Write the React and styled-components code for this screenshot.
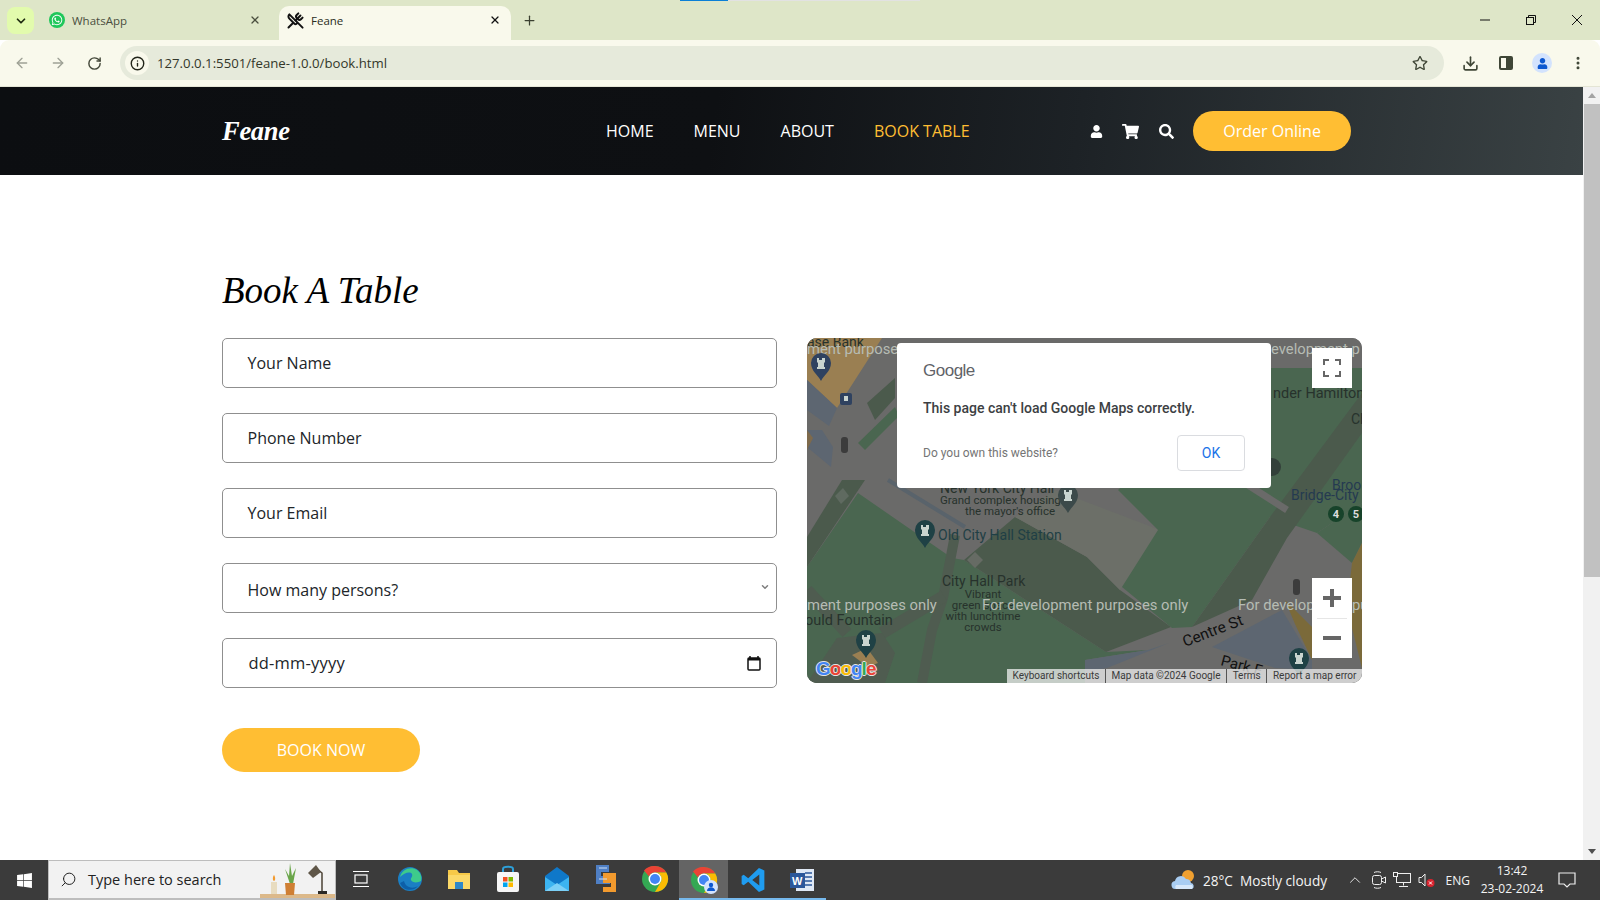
import React from 'react';
import styled, { createGlobalStyle } from 'styled-components';
import {
  FaUser, FaShoppingCart, FaSearch, FaWhatsapp, FaWindows, FaRegStar,
} from 'react-icons/fa';
import {
  ArrowLeft, ArrowRight, RotateCw, ChevronDown, X, Plus, Info, Download, EllipsisVertical, Search, UtensilsCrossed, ChevronUp,
} from 'lucide-react';

const GlobalStyle = createGlobalStyle`
  html, body { margin: 0; padding: 0; height: 100%; overflow: hidden; }
  body { font-family: "Open Sans", "Liberation Sans", sans-serif; background: #fff; }
  * { box-sizing: border-box; }
`;

const Screen = styled.div`
  width: 1600px;
  height: 900px;
  display: flex;
  flex-direction: column;
  overflow: hidden;
`;

/* browser chrome */
const TabStrip = styled.div`
  position: relative;
  height: 40px;
  background: #dee6c8;
  display: flex;
  align-items: flex-end;
  padding-left: 7px;
  flex: none;
`;

const TabMenu = styled.div`
  width: 27px;
  height: 27px;
  margin-bottom: 6px;
  margin-right: 7px;
  border-radius: 8px;
  background: #e2fbad;
  display: flex;
  align-items: center;
  justify-content: center;
  color: #1e2a10;
`;

const Tab = styled.div`
  position: relative;
  width: ${(p) => (p.$active ? '232px' : '238px')};
  height: 34px;
  padding: 0 ${(p) => (p.$active ? '10px' : '18px')} 6px 8px;
  border-radius: 10px 10px 0 0;
  display: flex;
  align-items: center;
  gap: 7px;
  font-size: 11.5px;
  background: ${(p) => (p.$active ? '#f9f9ec' : 'transparent')};
  color: ${(p) => (p.$active ? '#2a2d22' : '#4a4e3e')};
`;

const TabTitle = styled.span`
  flex: 1;
`;

const WaBadge = styled.span`
  width: 16px;
  height: 16px;
  border-radius: 50%;
  background: #1fc75a;
  color: #fff;
  display: flex;
  align-items: center;
  justify-content: center;
`;

const NewTab = styled.div`
  margin: 0 0 12px 11px;
  color: #3b4030;
  display: flex;
`;

const TopStripe = styled.div`
  position: absolute;
  top: 0;
  left: 680px;
  width: 240px;
  height: 1px;
  background: linear-gradient(to right, #0a7fd6 0 48px, #e2e2e2 48px);
`;

const WindowControls = styled.div`
  margin-left: auto;
  align-self: flex-start;
  display: flex;
  color: #111;
`;

const WindowButton = styled.div`
  width: 46px;
  height: 40px;
  display: flex;
  align-items: center;
  justify-content: center;
`;

const Toolbar = styled.div`
  height: 47px;
  flex: none;
  background: #f9f9ec;
  border-radius: 9px 9px 0 0;
  border-bottom: 1px solid #e4e5d5;
  display: flex;
  align-items: center;
  padding: 0 11px;
  gap: 14px;
`;

const NavArrow = styled.span`
  width: 22px;
  display: flex;
  justify-content: center;
  color: ${(p) => (p.$dim ? '#9ea195' : '#44483a')};
`;

const UrlBar = styled.div`
  flex: 1;
  height: 34px;
  margin: 0 1px;
  border-radius: 17px;
  background: #e6eadb;
  display: flex;
  align-items: center;
  padding: 0 16px 0 5px;
  font-size: 13.2px;
  color: #33372a;
`;

const InfoChip = styled.span`
  width: 24px;
  height: 24px;
  border-radius: 50%;
  background: #f9f9ec;
  display: flex;
  align-items: center;
  justify-content: center;
  margin-right: 8px;
  color: #22251a;
`;

const UrlText = styled.span`
  flex: 1;
`;

const ToolIcon = styled.span`
  width: 22px;
  display: flex;
  justify-content: center;
  color: #3f4636;
`;

const SidePanelIcon = styled.span`
  width: 14px;
  height: 14px;
  border: 2px solid #3f4636;
  border-radius: 2px;
  background: linear-gradient(to right, #f9f9ec 50%, #3f4636 50%);
`;

const Avatar = styled.span`
  width: 20px;
  height: 20px;
  border-radius: 50%;
  background: #d3e3fd;
  color: #0b57d0;
  display: flex;
  align-items: center;
  justify-content: center;
`;

/* page */
const Viewport = styled.div`
  flex: 1;
  display: flex;
  min-height: 0;
`;

const Page = styled.div`
  flex: 1;
  background: #fff;
`;

const Scrollbar = styled.div`
  width: 17px;
  background: #f1f1f1;
  display: flex;
  flex-direction: column;
  align-items: center;
  justify-content: space-between;
  position: relative;
`;

const ScrollArrow = styled.span`
  width: 0;
  height: 0;
  margin: 6px 0;
  border-left: 4px solid transparent;
  border-right: 4px solid transparent;
  ${(p) => (p.$down ? 'border-top: 5px solid #505050;' : 'border-bottom: 5px solid #a3a3a3;')}
`;

const ScrollThumb = styled.span`
  position: absolute;
  top: 17px;
  left: 1px;
  right: 0;
  height: 473px;
  background: #c1c1c1;
`;

const Header = styled.header`
  height: 88px;
  padding: 24px 0 0 222px;
  background: linear-gradient(98deg, #0c0e11 0%, #0e1013 45%, #1d2226 68%, #3a4244 100%);
  display: flex;
  align-items: flex-start;
  color: #fff;
  width: 1583px;
`;

const Logo = styled.div`
  font-family: "Liberation Serif", serif;
  font-style: italic;
  font-weight: 700;
  font-size: 26.5px;
  line-height: 40px;
  letter-spacing: -0.3px;
  width: 384px;
`;

const NavLink = styled.a`
  font-size: 16px;
  line-height: 40px;
  margin-right: 40px;
  color: ${(p) => (p.$active ? '#ffbe33' : '#fff')};
`;

const UserIcons = styled.div`
  display: flex;
  align-items: center;
  height: 40px;
  margin-left: 80px;
  gap: 19.5px;
`;

const OrderButton = styled.a`
  width: 158px;
  height: 40px;
  margin-left: 19.5px;
  border-radius: 20px;
  background: #ffbe33;
  display: flex;
  align-items: center;
  justify-content: center;
  font-size: 16px;
  color: #fff;
`;

const Content = styled.main`
  padding: 91px 221px 0 222px;
`;

const Heading = styled.h2`
  margin: 0 0 22px;
  font-family: "Liberation Serif", serif;
  font-style: italic;
  font-weight: 400;
  font-size: 37px;
  line-height: 50px;
  color: #000;
`;

const Columns = styled.div`
  display: flex;
  gap: 30px;
`;

const FormColumn = styled.form`
  width: 555px;
  display: flex;
  flex-direction: column;
  gap: 25px;
`;

const Field = styled.div`
  height: 50px;
  border: 1px solid #8f8f8f;
  border-radius: 5px;
  padding: ${(p) => (p.$select ? '4px' : '0')} 8px 0 24.5px;
  font-size: 16px;
  display: flex;
  align-items: center;
  justify-content: space-between;
  color: #212529;
`;

const DateText = styled.span`
  font-size: 16.5px;
  letter-spacing: 0.2px;
  margin: -1px 0 0 1px;
`;

const SelectChevron = styled.span`
  color: #7d7d7d;
  display: flex;
  margin: -6px -2px 0 0;
`;

const BookButton = styled.a`
  width: 198px;
  height: 44px;
  margin-top: 15px;
  border-radius: 22px;
  background: #ffbe33;
  color: #fff;
  font-size: 16px;
  display: flex;
  align-items: center;
  justify-content: center;
`;

const MapBox = styled.div`
  position: relative;
  width: 555px;
  height: 345px;
  border-radius: 10px;
  overflow: hidden;
  background: #6a6a69;
`;

const MapDrawing = styled.svg`
  display: block;
  font-family: "Roboto", sans-serif;
`;

const Dialog = styled.div`
  position: absolute;
  left: 90px;
  top: 5px;
  width: 374px;
  height: 145px;
  background: #fff;
  border-radius: 4px;
  padding: 18px 26px 0 26px;
  font-family: "Roboto", sans-serif;
`;

const GoogleWord = styled.div`
  font-family: "Liberation Sans", sans-serif;
  font-size: 17px;
  line-height: 20px;
  letter-spacing: -0.5px;
  color: #5f6368;
`;

const DialogMessage = styled.div`
  margin-top: 17px;
  font-size: 14px;
  font-weight: 500;
  line-height: 20px;
  color: #3c4043;
`;

const DialogFoot = styled.div`
  margin-top: 17px;
  display: flex;
  align-items: center;
  justify-content: space-between;
`;

const OwnLink = styled.span`
  font-size: 12px;
  color: #757575;
`;

const OkButton = styled.span`
  width: 68px;
  height: 36px;
  border: 1px solid #dadce0;
  border-radius: 4px;
  color: #1a73e8;
  font-size: 14px;
  display: flex;
  align-items: center;
  justify-content: center;
`;

const MapControl = styled.div`
  position: absolute;
  right: 10px;
  width: 40px;
  background: #fff;
  display: flex;
  flex-direction: column;
  align-items: center;
  top: ${(p) => p.$top}px;
  height: ${(p) => p.$h}px;
`;

const ControlCell = styled.span`
  flex: 1;
  display: flex;
  align-items: center;
  justify-content: center;
`;

const ControlDivider = styled.span`
  width: 30px;
  height: 1px;
  background: #e6e6e6;
`;

const Attribution = styled.div`
  position: absolute;
  right: 0;
  bottom: 0;
  height: 14px;
  display: flex;
  background: rgba(245, 245, 245, 0.72);
  font-family: "Roboto", sans-serif;
  font-size: 10px;
  line-height: 14px;
  color: #3a3a3a;
`;

const AttrItem = styled.span`
  padding: 0 5.6px;
  border-right: 1px solid #555;
  &:last-child { border-right: 0; }
`;

const GoogleMark = styled.div`
  position: absolute;
  left: 9px;
  bottom: 3px;
  font-family: "Liberation Sans", sans-serif;
  font-weight: 700;
  font-size: 19px;
  letter-spacing: -1px;
  line-height: 22px;
  text-shadow: -1px 0 #e4e4e4, 1px 0 #e4e4e4, 0 -1px #e4e4e4, 0 1px #e4e4e4;
`;

const MarkLetter = styled.span`
  color: ${(p) => p.$c};
`;

/* taskbar */
const Taskbar = styled.footer`
  height: 40px;
  flex: none;
  background: #3b3b3b;
  display: flex;
  align-items: center;
  color: #fff;
`;

const StartButton = styled.div`
  width: 48px;
  display: flex;
  justify-content: center;
`;

const SearchBox = styled.div`
  position: relative;
  width: 288px;
  height: 40px;
  background: #f2f2f2;
  border: 1px solid #bdbdbd;
  border-bottom-width: 2px;
  color: #222;
  font-size: 14.5px;
  display: flex;
  align-items: center;
  gap: 11px;
  padding-left: 11px;
  overflow: hidden;
`;

const TaskApps = styled.div`
  display: flex;
  height: 40px;
`;

const TaskApp = styled.div`
  width: 49px;
  height: 40px;
  display: flex;
  align-items: center;
  justify-content: center;
  background: ${(p) => (p.$focus ? '#646464' : 'transparent')};
  border-bottom: 2px solid ${(p) => (p.$open ? '#76b9ed' : 'transparent')};
  padding-top: ${(p) => (p.$open ? '2px' : '0')};
`;

const Tray = styled.div`
  margin-left: auto;
  display: flex;
  align-items: center;
  height: 40px;
  font-size: 14px;
  color: #f4f4f4;
`;

const Weather = styled.div`
  display: flex;
  align-items: center;
  gap: 6px;
  margin-right: 19px;
  font-size: 13.6px;
`;

const TrayIcons = styled.div`
  display: flex;
  align-items: center;
  gap: 6.5px;
`;

const Lang = styled.span`
  font-size: 12px;
  margin-left: 10px;
`;

const Clock = styled.div`
  width: 64px;
  margin-left: 10px;
  font-size: 12px;
  line-height: 18px;
  text-align: center;
  white-space: nowrap;
`;

const Notify = styled.div`
  width: 46px;
  margin-right: 10px;
  display: flex;
  justify-content: center;
`;

const EdgeIcon = () => (
  <svg width="28" height="28" viewBox="0 0 28 28">
    <circle cx="14" cy="14" r="12" fill="#1b7fc4" />
    <path d="M4 12C6 4 15 1 21 5c4 3 5 7 4 11-3 2-9 2-10-1-1-2 2-3 1-6-2-3-8-1-12 3z" fill="#3ecb8b" />
    <path d="M8 16c1 5 7 9 14 5-5 6-15 5-18-3z" fill="#0d5fa8" />
  </svg>
);

const FolderIcon = () => (
  <svg width="26" height="24" viewBox="0 0 26 24">
    <path d="M2 3h9l2 3h11v16H2z" fill="#f7c948" />
    <path d="M2 8h22v14H2z" fill="#fcd968" />
    <path d="M9 15h8v7H9z" fill="#2f88c9" />
  </svg>
);

const StoreIcon = () => (
  <svg width="26" height="28" viewBox="0 0 26 28">
    <path d="M8 7V4c0-3 10-3 10 0v3" fill="none" stroke="#2d9fd8" strokeWidth="2" />
    <rect x="2" y="7" width="22" height="20" rx="2" fill="#f6f6f6" />
    <rect x="8" y="12" width="4.5" height="4.5" fill="#f25022" />
    <rect x="13.5" y="12" width="4.5" height="4.5" fill="#7fba00" />
    <rect x="8" y="17.5" width="4.5" height="4.5" fill="#00a4ef" />
    <rect x="13.5" y="17.5" width="4.5" height="4.5" fill="#ffb900" />
  </svg>
);

const MailIcon = () => (
  <svg width="26" height="26" viewBox="0 0 26 26">
    <path d="M1 10 13 1l12 9v15H1z" fill="#0f78c9" />
    <path d="M1 11l12 8 12-8v14H1z" fill="#3cb4f1" />
    <path d="M1 25l12-8 12 8z" fill="#7cd0f7" />
  </svg>
);

const SlidesIcon = () => (
  <svg width="26" height="30" viewBox="0 0 26 30">
    <path d="M3 1h13v7H8v4h9v8H3z" fill="#4f7fc4" />
    <path d="M10 9h13v19H10v-5h8v-4h-8z" fill="#f29a2e" />
    <path d="M6 4h8M6 15h8" stroke="#cfe0f5" strokeWidth="1" />
  </svg>
);

const ChromeIcon = ({ badge }) => (
  <svg width="28" height="28" viewBox="0 0 28 28">
    <circle cx="14" cy="14" r="13" fill="#34a853" />
    <path d="M14 1a13 13 0 0 1 11.3 6.5H14a6.5 6.5 0 0 0-6 4L3 5.5A13 13 0 0 1 14 1z" fill="#ea4335" />
    <path d="M25.3 7.5A13 13 0 0 1 14 27l5.6-9.7A6.5 6.5 0 0 0 14 7.5z" fill="#fbbc04" />
    <circle cx="14" cy="14" r="6.5" fill="#fff" />
    <circle cx="14" cy="14" r="5" fill="#4285f4" />
    {badge && (
      <>
        <circle cx="21" cy="21" r="7" fill="#d3e3fd" />
        <circle cx="21" cy="19" r="2.2" fill="#0b57d0" />
        <path d="M17 25c0-5 8-5 8 0z" fill="#0b57d0" />
      </>
    )}
  </svg>
);

const VsCodeIcon = () => (
  <svg width="26" height="28" viewBox="0 0 24 24">
    <path d="M17.5 1 7.6 10.4 3.4 7.2 1.5 8.2v7.6l1.9 1 4.2-3.2L17.5 23l5-2.2V3.2zM17.8 7v10l-6.5-5z" fill="#1f9cf0" />
  </svg>
);

const WordIcon = () => (
  <svg width="26" height="26" viewBox="0 0 26 26">
    <rect x="7" y="2" width="18" height="22" fill="#dfe8f5" />
    <path d="M16 6h7M16 10h7M16 14h7M16 18h7" stroke="#2b579a" strokeWidth="1.5" />
    <rect x="1" y="6" width="15" height="15" fill="#2b579a" />
    <text x="3" y="18" fontFamily="Liberation Sans" fontWeight="700" fontSize="11" fill="#fff">W</text>
  </svg>
);

const TaskViewIcon = () => (
  <svg width="18" height="20" viewBox="0 0 18 20" fill="none" stroke="#fff" strokeWidth="1.2">
    <rect x="3" y="6" width="12" height="8" />
    <path d="M1 2.5h16M1 17.5h16" />
  </svg>
);

const CloudIcon = () => (
  <svg width="26" height="22" viewBox="0 0 26 22">
    <circle cx="17" cy="7" r="6" fill="#f0a030" />
    <path d="M5 20a4 4 0 0 1-1-8 6 6 0 0 1 11-2 5 5 0 0 1 5 4 3.2 3.2 0 0 1 1 6z" fill="#a9cdf2" />
    <path d="M5 20a3 3 0 0 1 0-4h16a3 3 0 0 1 0 4z" fill="#d7e8fa" />
  </svg>
);

const DeskDrawing = styled.svg`
  position: absolute;
  right: 0;
  top: 0;
`;

const DeskScene = () => (
  <DeskDrawing width="75" height="40" viewBox="0 0 75 40">
    <rect x="0" y="33" width="75" height="7" fill="#dcb98a" />
    <rect x="11" y="21" width="6" height="12" fill="#e8dcc0" />
    <path d="M14 14c-2 3-1 6 0 6s2-3 0-6z" fill="#f29a2e" />
    <path d="M30 23 25 8l4 7 1-13 2 13 4-8-3 16z" fill="#6aa64a" />
    <path d="M25 22h10l-1 12h-8z" fill="#cf7f34" />
    <path d="M62 31V12l-6-5" stroke="#4b4135" strokeWidth="1.5" fill="none" />
    <path d="M48 12l8-8 5 7-8 6z" fill="#5f5648" />
    <rect x="58" y="30" width="9" height="3" fill="#2d2a26" />
  </DeskDrawing>
);

const TrayVideo = () => (
  <svg width="16" height="18" viewBox="0 0 16 18" fill="none" stroke="#eee" strokeWidth="1">
    <rect x="1.5" y="4.5" width="9" height="9" rx="2" />
    <path d="M10.5 8l4-2v6l-4-2M3 1.5c2-1 5-1 7 0M3 16.5c2 1 5 1 7 0" />
  </svg>
);

const TrayNetwork = () => (
  <svg width="18" height="16" viewBox="0 0 18 16" fill="none" stroke="#eee" strokeWidth="1">
    <rect x="3.5" y="1.5" width="14" height="9" />
    <rect x="0.5" y="0.5" width="4" height="4" fill="#3b3b3b" />
    <path d="M10.5 10.5v3M6 14.5h9" />
  </svg>
);

const TraySound = () => (
  <svg width="18" height="16" viewBox="0 0 18 16">
    <path d="M1 5.5h2.5L7 2v12l-3.5-3.5H1z" fill="none" stroke="#eee" />
    <circle cx="12.5" cy="11" r="4" fill="#d9232e" />
    <path d="M11 9.5l3 3m0-3-3 3" stroke="#fff" />
  </svg>
);

const NotifyIcon = () => (
  <svg width="18" height="16" viewBox="0 0 18 16" fill="none" stroke="#eee" strokeWidth="1.2">
    <path d="M1 1h16v11h-5l-3 3-3-3H1z" />
  </svg>
);

const MapLabel = ({ x, y, s = 12, c = '#27322c', a = 'start', children, r }) => (
  <text x={x} y={y} fontSize={s} fill={c} textAnchor={a} transform={r ? `rotate(${r} ${x} ${y})` : undefined}>
    {children}
  </text>
);

const Pin = ({ x, y, c = '#1f4145' }) => (
  <g transform={`translate(${x} ${y})`}>
    <path d="M0 18C-3 12-10 8-10 0a10 10 0 0 1 20 0c0 8-7 12-10 18z" fill={c} />
    <path d="M-4-5h2v2h3v-2h3v4l-1 1v4h1v2h-8v-2h1v-4l-1-1z" fill="#c9d4cf" />
  </g>
);

const GREEN = '#4a6650';
const DARK = '#4b5a4c';
const WATERMARK = '#b6bcb4';

const MapArt = () => (
  <MapDrawing width="555" height="345" viewBox="0 0 555 345">
    <rect width="555" height="345" fill="#6a6a69" />
    {/* top left blocks */}
    <path d="M0 0H75L30 70 0 42z" fill="#9a7f52" />
    <path d="M0 42 30 70 22 88 0 72z" fill="#5d6671" />
    <path d="M0 92H15L26 109 24 129 0 109z" fill="#5d6671" />
    <path d="M0 92 6 100 0 112z" fill="#7e6a4c" />
    <path d="M51 105 88 69 92 78 58 112z" fill={GREEN} />
    {/* left park */}
    <path d="M0 229 51 155 145 220 157 222 299 314 341 312 278 322V345H0z" fill={GREEN} />
    <path d="M0 199 35 142H58L0 229z" fill={DARK} />
    <path d="M60 65 88 40V60L68 82z" fill={DARK} />
    <path d="M81 142 158 189" stroke="#59636b" strokeWidth="4" />
    <path d="M148 197 136 260 125 292 115 345" stroke="#4f5c50" strokeWidth="10" fill="none" />
    <path d="M137 258 75 295" stroke="#4f5c50" strokeWidth="12" />
    <path d="M0 252 40 295" stroke="#4f5c50" strokeWidth="12" />
    <path d="M30 300 75 295 88 315 78 345H0z" fill="#4f5c50" />
    <path d="M45 317 60 310 71 325 61 329z" fill="#9a7f52" />
    {/* city hall block */}
    <path d="M157 222 208 179 280 219 313 252 364 289 299 314z" fill={DARK} />
    <path d="M248 152 353 192 313 252 280 219 208 179z" fill="#6c6f68" />
    <path d="M160 222 168 214 176 222 168 230z" fill="#666b64" />
    <path d="M28 158 36 150 42 158 34 166z" fill="#5f6a60" />
    {/* right park */}
    <path d="M440 30H555V165L510 195 463 179 385 289 365 290 315 249 351 192 311 152z" fill={GREEN} />
    <path d="M555 55V95L480 200 445 262 385 289 463 179z" fill={DARK} />
    <path d="M430 140 480 172" stroke="#6a6a69" strokeWidth="7" />
    <path d="M545 225 555 205V165L510 195z" fill={GREEN} />
    {/* south east corner */}
    <path d="M278 322 341 312 362 305 300 330 278 334z" fill="#5d6671" />
    <path d="M405 309 475 272 505 322V332L468 330z" fill="#5d6671" />
    <path d="M478 262 505 289V322L488 286z" fill="#7b6a3a" />
    <path d="M545 225 555 205V330L540 270z" fill="#7b6a3a" />
    {/* labels */}
    <MapLabel x="0" y="9" s={14}>ase Bank</MapLabel>
    <MapLabel x="0" y="16" s={14.8} c={WATERMARK}>ment purposes</MapLabel>
    <MapLabel x="464" y="16" s={14.8} c={WATERMARK}>evelopment p</MapLabel>
    <MapLabel x="466" y="60" s={14.5}>nder Hamilton</MapLabel>
    <MapLabel x="544" y="86" s={14}>Ch</MapLabel>
    <MapLabel x="525" y="152" s={14} c="#253a50">Brool</MapLabel>
    <MapLabel x="484" y="162" s={14} c="#253a50">Bridge-City</MapLabel>
    <MapLabel x="133" y="155" s={14}>New York City Hall</MapLabel>
    <MapLabel x="133" y="166" s={11.5}>Grand complex housing</MapLabel>
    <MapLabel x="248" y="177" s={11.5} a="end">the mayor's office</MapLabel>
    <MapLabel x="131" y="202" s={14} c="#1f3f45">Old City Hall Station</MapLabel>
    <MapLabel x="135" y="248" s={14}>City Hall Park</MapLabel>
    <MapLabel x="176" y="260" s={11.5} a="middle">Vibrant</MapLabel>
    <MapLabel x="176" y="271" s={11.5} a="middle">green space</MapLabel>
    <MapLabel x="176" y="282" s={11.5} a="middle">with lunchtime</MapLabel>
    <MapLabel x="176" y="293" s={11.5} a="middle">crowds</MapLabel>
    <MapLabel x="-2" y="287" s={14.5}>ould Fountain</MapLabel>
    <MapLabel x="0" y="272" s={14.8} c={WATERMARK}>ment purposes only</MapLabel>
    <MapLabel x="175" y="272" s={14.8} c={WATERMARK}>For development purposes only</MapLabel>
    <MapLabel x="431" y="272" s={14.8} c={WATERMARK}>For development purposes only</MapLabel>
    <MapLabel x="378" y="309" s={15.5} c="#111" r={-21}>Centre St</MapLabel>
    <MapLabel x="413" y="327" s={15} c="#111" r={15}>Park F</MapLabel>
    <Pin x={14} y={25} c="#2f4260" />
    <Pin x={118} y={192} />
    <Pin x={261} y={157} c="#3c4a4a" />
    <Pin x={59} y={302} />
    <Pin x={492} y={320} />
    <circle cx="465" cy="129" r="9" fill="#33403a" />
    <circle cx="529" cy="176" r="8" fill="#17432a" />
    <circle cx="549" cy="176" r="8" fill="#17432a" />
    <text x="529" y="180" fontSize="11" fontWeight="700" fill="#ddd" textAnchor="middle">4</text>
    <text x="549" y="180" fontSize="11" fontWeight="700" fill="#ddd" textAnchor="middle">5</text>
    <rect x="33" y="55" width="12" height="12" rx="2" fill="#2f4260" />
    <rect x="37" y="58" width="4" height="5" fill="#c9d4cf" />
    <rect x="34" y="99" width="7" height="16" rx="3" fill="#3c3c3c" />
    <rect x="486" y="241" width="7" height="16" rx="3" fill="#3c3c3c" />
  </MapDrawing>
);

const App = () => {
  return (
    <Screen>
      <GlobalStyle />
      <TabStrip>
        <TopStripe />
        <TabMenu><ChevronDown size={14} strokeWidth={3} /></TabMenu>
        <Tab>
          <WaBadge><FaWhatsapp size={12} /></WaBadge>
          <TabTitle>WhatsApp</TabTitle>
          <X size={12} strokeWidth={2.5} />
        </Tab>
        <Tab $active>
          <UtensilsCrossed size={17} strokeWidth={2.8} color="#111" />
          <TabTitle>Feane</TabTitle>
          <X size={12} strokeWidth={2.5} color="#111" />
        </Tab>
        <NewTab><Plus size={15} strokeWidth={2} /></NewTab>
        <WindowControls>
          <WindowButton>
            <svg width="12" height="12" viewBox="0 0 12 12"><path d="M1 6h10" stroke="#111" /></svg>
          </WindowButton>
          <WindowButton>
            <svg width="12" height="12" viewBox="0 0 12 12" fill="none" stroke="#111">
              <rect x="1.5" y="3.5" width="7" height="7" />
              <path d="M3.5 3.5v-2h7v7h-2" />
            </svg>
          </WindowButton>
          <WindowButton>
            <svg width="12" height="12" viewBox="0 0 12 12"><path d="M1 1l10 10M11 1 1 11" stroke="#111" /></svg>
          </WindowButton>
        </WindowControls>
      </TabStrip>
      <Toolbar>
        <NavArrow $dim><ArrowLeft size={16} strokeWidth={2} /></NavArrow>
        <NavArrow $dim><ArrowRight size={16} strokeWidth={2} /></NavArrow>
        <NavArrow><RotateCw size={15} strokeWidth={2.3} /></NavArrow>
        <UrlBar>
          <InfoChip><Info size={15} strokeWidth={2.2} /></InfoChip>
          <UrlText>127.0.0.1:5501/feane-1.0.0/book.html</UrlText>
          <FaRegStar size={16} color="#3f4636" />
        </UrlBar>
        <ToolIcon><Download size={17} strokeWidth={2.3} /></ToolIcon>
        <ToolIcon><SidePanelIcon /></ToolIcon>
        <ToolIcon><Avatar><FaUser size={11} /></Avatar></ToolIcon>
        <ToolIcon><EllipsisVertical size={16} strokeWidth={2.5} /></ToolIcon>
      </Toolbar>
      <Viewport>
        <Page>
          <Header>
            <Logo>Feane</Logo>
            <NavLink>HOME</NavLink>
            <NavLink>MENU</NavLink>
            <NavLink>ABOUT</NavLink>
            <NavLink $active>BOOK TABLE</NavLink>
            <UserIcons>
              <FaUser size={13} />
              <FaShoppingCart size={17} />
              <FaSearch size={15} />
            </UserIcons>
            <OrderButton>Order Online</OrderButton>
          </Header>
          <Content>
            <Heading>Book A Table</Heading>
            <Columns>
              <FormColumn>
                <Field>Your Name</Field>
                <Field>Phone Number</Field>
                <Field>Your Email</Field>
                <Field $select>How many persons?<SelectChevron><ChevronDown size={10} strokeWidth={3.5} /></SelectChevron></Field>
                <Field>
                  <DateText>dd-mm-yyyy</DateText>
                  <svg width="14" height="16" viewBox="0 0 14 16" fill="none" style={{ marginRight: 7 }}>
                    <path d="M3 1v2M11 1v2" stroke="#111" strokeWidth="1.5" />
                    <rect x="1" y="3" width="12" height="12" rx="1" stroke="#111" strokeWidth="1.5" />
                    <rect x="1" y="3" width="12" height="2.5" fill="#111" />
                  </svg>
                </Field>
                <BookButton>BOOK NOW</BookButton>
              </FormColumn>
              <MapBox>
                <MapArt />
                <Dialog>
                  <GoogleWord>Google</GoogleWord>
                  <DialogMessage>This page can't load Google Maps correctly.</DialogMessage>
                  <DialogFoot>
                    <OwnLink>Do you own this website?</OwnLink>
                    <OkButton>OK</OkButton>
                  </DialogFoot>
                </Dialog>
                <MapControl $top={10} $h={40}>
                  <ControlCell>
                    <svg width="18" height="18" viewBox="0 0 18 18" fill="none" stroke="#666" strokeWidth="2">
                      <path d="M1 6V1h5M12 1h5v5M17 12v5h-5M6 17H1v-5" />
                    </svg>
                  </ControlCell>
                </MapControl>
                <MapControl $top={240} $h={80}>
                  <ControlCell>
                    <svg width="18" height="18" viewBox="0 0 18 18"><path d="M7 0h4v7h7v4h-7v7H7v-7H0V7h7z" fill="#666" /></svg>
                  </ControlCell>
                  <ControlDivider />
                  <ControlCell>
                    <svg width="18" height="18" viewBox="0 0 18 18"><path d="M0 7h18v4H0z" fill="#666" /></svg>
                  </ControlCell>
                </MapControl>
                <GoogleMark>
                  <MarkLetter $c="#4285f4">G</MarkLetter>
                  <MarkLetter $c="#ea4335">o</MarkLetter>
                  <MarkLetter $c="#fbbc04">o</MarkLetter>
                  <MarkLetter $c="#4285f4">g</MarkLetter>
                  <MarkLetter $c="#34a853">l</MarkLetter>
                  <MarkLetter $c="#ea4335">e</MarkLetter>
                </GoogleMark>
                <Attribution>
                  <AttrItem>Keyboard shortcuts</AttrItem>
                  <AttrItem>Map data ©2024 Google</AttrItem>
                  <AttrItem>Terms</AttrItem>
                  <AttrItem>Report a map error</AttrItem>
                </Attribution>
              </MapBox>
            </Columns>
          </Content>
        </Page>
        <Scrollbar>
          <ScrollArrow />
          <ScrollThumb />
          <ScrollArrow $down />
        </Scrollbar>
      </Viewport>
      <Taskbar>
        <StartButton><FaWindows size={17} /></StartButton>
        <SearchBox>
          <Search size={17} strokeWidth={1.4} style={{ transform: 'scaleX(-1)' }} />
          Type here to search
          <DeskScene />
        </SearchBox>
        <TaskApps>
          <TaskApp><TaskViewIcon /></TaskApp>
          <TaskApp><EdgeIcon /></TaskApp>
          <TaskApp><FolderIcon /></TaskApp>
          <TaskApp><StoreIcon /></TaskApp>
          <TaskApp><MailIcon /></TaskApp>
          <TaskApp><SlidesIcon /></TaskApp>
          <TaskApp><ChromeIcon /></TaskApp>
          <TaskApp $focus $open><ChromeIcon badge /></TaskApp>
          <TaskApp $open><VsCodeIcon /></TaskApp>
          <TaskApp $open><WordIcon /></TaskApp>
        </TaskApps>
        <Tray>
          <Weather><CloudIcon />28°C&nbsp; Mostly cloudy</Weather>
          <TrayIcons>
            <ChevronUp size={18} strokeWidth={1.2} />
            <TrayVideo />
            <TrayNetwork />
            <TraySound />
          </TrayIcons>
          <Lang>ENG</Lang>
          <Clock>13:42<br />23-02-2024</Clock>
          <Notify><NotifyIcon /></Notify>
        </Tray>
      </Taskbar>
    </Screen>
  );
};

export default App;
